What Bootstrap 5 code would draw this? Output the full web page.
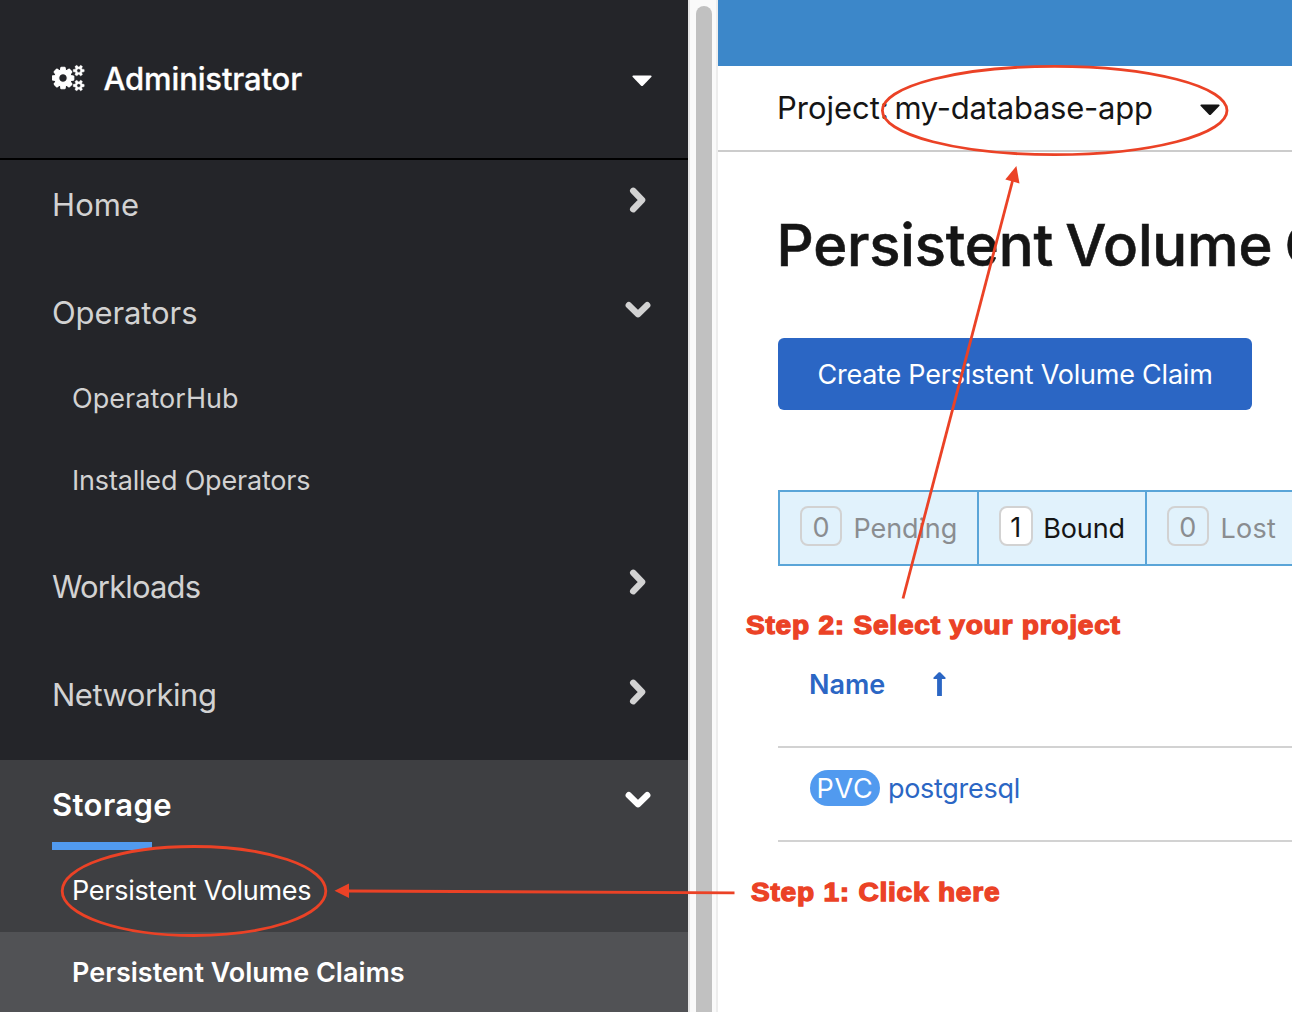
<!DOCTYPE html>
<html lang="en">
<head>
<meta charset="utf-8">
<meta name="viewport" content="width=device-width, initial-scale=1">
<title>Persistent Volume Claims</title>
<link href="https://cdn.jsdelivr.net/npm/bootstrap@5.3.0/dist/css/bootstrap.min.css" rel="stylesheet">
<style>
  body { font-family: Inter, sans-serif; font-size: 27px; line-height: 1.2; color: #151515; background: #fff; }
  .console { height: 1012px; position: relative; }
  .side { width: 688px; background: #242529; color: #d2d2d2; }
  .perspective { height: 160px; border-bottom: 2px solid #000; color: #fff; padding: 0 36px 0 52px; font-size: 31px; font-weight: 500; letter-spacing: -.14px; -webkit-text-stroke: .3px #fff; }
  .perspective .gears { margin: -2px 18.5px 0 0; }
  .section-head { height: 90px; padding: 0 37px 0 52px; font-size: 31px; letter-spacing: -.1px; }
  .section-head svg { margin-top: -10px; }
  .sec-home { height: 108px; }
  .sec-operators { height: 274px; }
  .sec-workloads { height: 108px; }
  .sec-networking { height: 110px; }
  .sec-operators .section-head svg, .sec-networking .section-head svg { margin-top: -6px; }
  .sec-storage { height: 252px; background: #3e3f42; color: #fff; }
  .sec-storage .section-head { font-weight: 600; letter-spacing: .4px; position: relative; }
  .sec-storage .section-head::after { content: ""; position: absolute; left: 52px; bottom: 0; width: 100px; height: 8px; background: #519aef; }
  .section-link { height: 82px; padding-left: 72px; letter-spacing: -.19px; }
  .section-link.current { background: #515255; font-weight: 600; letter-spacing: 0; }
  .ls-home { letter-spacing: .1px; }
  .ls-work { letter-spacing: -.85px; }
  .ls-net { letter-spacing: -.5px; }
  .section-link.ls-hub { letter-spacing: .05px; }
  .section-link.ls-pv { letter-spacing: -.28px; }
  .scroll-track { width: 30px; background: #fafafa; border-left: 2px solid #e6e6e6; border-right: 2px solid #ededed; padding: 6px 4px 0 6px; }
  .scroll-thumb { background: #c1c1c1; border-radius: 8px 8px 0 0; }
  .pane { min-width: 0; }
  .masthead { height: 66px; background: #3c87c9; }
  .project-bar { height: 86px; border-bottom: 2px solid #ccc; padding: 0 0 1px 59px; font-size: 31px; }
  .project-name { margin-left: 5.5px; letter-spacing: -.25px; }
  .project-bar svg { margin: 4px 0 0 47px; }
  .content { padding-left: 60px; }
  .page-title { font-size: 58px; font-weight: 500; letter-spacing: -.18px; word-spacing: -3px; line-height: 70px; margin: 58px 0 58px -1.5px; white-space: nowrap; -webkit-text-stroke: .6px #151515; }
  .btn-create { --bs-btn-color: #fff; --bs-btn-bg: #2b66c4; --bs-btn-hover-bg: #1f4f9c; --bs-btn-border-width: 0; width: 474px; height: 72px; font-size: 27px; border-radius: 6px; padding: 2px 0 0; letter-spacing: -.22px; }
  .filters { margin-top: 80px; height: 76px; width: 700px; border: 2px solid #5aa5d8; background: #e1f2fc; white-space: nowrap; }
  .filter { padding: 2px 19.5px 0 20px; border-right: 2px solid #5aa5d8; color: #8a8d90; letter-spacing: -.1px; }
  .filter .count { height: 40px; width: 42px; padding-top: 5px; border: 2px solid #d2d2d2; border-radius: 8px; margin: -6px 11.5px 0 0; }
  .filter.active { color: #151515; }
  .filter.active .count { background: #fff; width: 34px; margin-right: 10.5px; }
  .filter.lost { letter-spacing: .3px; margin-left: .5px; }
  .grid-head { height: 182px; border-bottom: 2px solid #d2d2d2; padding: 58px 0 0 31px; color: #2b66c4; font-weight: 600; }
  .grid-head svg { margin: -2px 0 0 48px; }
  .grid-row { height: 94px; border-bottom: 2px solid #d2d2d2; padding: 0 0 8px 32px; color: #2b66c4; letter-spacing: -.3px; }
  .kind { width: 70px; height: 36px; border-radius: 18px; background: #519aef; color: #fff; letter-spacing: .7px; padding-top: 3px; margin: -4px 8px 0 0; }
  .grid-row .volume { margin-top: -1px; }
  .marks { position: absolute; left: 0; top: 0; pointer-events: none; }
  .step-note { position: absolute; font: 700 26px/30px "Liberation Sans", sans-serif; color: #eb4226; -webkit-text-stroke: 1.3px #eb4226; letter-spacing: .7px; white-space: nowrap; transform: scaleX(1.08); transform-origin: left; }
  .note-project { left: 746px; top: 610px; }
  .note-click { left: 751px; top: 877px; }
</style>
<script src="https://cdn.jsdelivr.net/npm/bootstrap@5.3.0/dist/js/bootstrap.bundle.min.js"></script>
</head>
<body class="overflow-hidden">
<svg width="0" height="0" class="position-absolute">
  <symbol id="chev-right" viewBox="0 0 25 26"><path d="M7.7 3.8 16.6 13 7.7 22.2" fill="none" stroke="currentColor" stroke-width="6.4" stroke-linecap="round" stroke-linejoin="round"/></symbol>
  <symbol id="chev-down" viewBox="0 0 26 26"><path d="M3.8 8.2 13 17.2 22.2 8.2" fill="none" stroke="currentColor" stroke-width="6.4" stroke-linecap="round" stroke-linejoin="round"/></symbol>
  <symbol id="caret" viewBox="0 0 20 12"><path d="M1.3.5h17.4c.9 0 1.2.8.6 1.5l-8.2 8.500c-.7.7-1.500.7-2.200 0L.7 2C.1 1.300.4.5 1.300.5z" fill="currentColor"/></symbol>
  <g id="small-gear"><path d="M1664 384q0-52-38-90t-90-38-90 38-38 90q0 53 37.500 90.500t90.500 37.500 90.500-37.500 37.500-90.500zM1920 314v140q0 16-149 31-12 27-30 52 51 113 51 138 0 4-4 7-122 71-124 71-8 0-46-47t-52-68q-20 2-30 2t-30-2q-14 21-52 68t-46 47q-2 0-124-71-4-3-4-7 0-25 51-138-18-25-30-52-149-15-149-31v-140q0-16 149-31 13-29 30-52-51-113-51-138 0-4 4-7 4-2 35-20t59-34 30-16q8 0 46 46.500t52 67.500q20-2 30-2t30 2q51-71 92-112l6-2q4 0 124 70 4 3 4 7 0 25-51 138 17 23 30 52 149 15 149 31z"/></g>
</svg>
<div class="console d-flex overflow-hidden">
  <nav class="side flex-shrink-0">
    <div class="perspective d-flex align-items-center">
      <svg class="gears" width="33" height="28" viewBox="0 0 33 28" fill="#fff" stroke="#fff">
        <path stroke-width="70" transform="translate(11 14) scale(.0168) translate(-640 -896)" d="M896 896q0-106-75-181t-181-75-181 75-75 181 75 181 181 75 181-75 75-181zM1280 805v185q0 10-7 19.500t-16 10.500l-155 24q-11 35-32 76 34 48 90 115 7 11 7 20 0 12-7 19-23 30-82.500 89.500t-78.500 59.500q-11 0-21-7l-115-90q-37 19-77 31-11 108-23 155-7 24-30 24h-186q-11 0-20-7.500t-10-17.500l-23-153q-34-10-75-31l-118 89q-7 7-20 7-11 0-21-8-144-133-144-160 0-9 7-19 10-14 41-53t47-61q-23-44-35-82l-152-24q-10-1-17-9.500t-7-19.500v-185q0-10 7-19.500t16-10.500l155-24q11-35 32-76-34-48-90-115-7-11-7-20 0-12 7-20 22-30 82-89t79-59q11 0 21 7l115 90q34-18 77-32 11-108 23-154 7-24 30-24h186q11 0 20 7.500t10 17.500l23 153q34 10 75 31l118-89q8-7 20-7 11 0 21 8 144 133 144 160 0 8-7 19-12 16-42 54t-45 60q23 48 34 82l152 23q10 2 17 10.500t7 19.500z"/>
        <use stroke-width="36" href="#small-gear" transform="translate(26.7 6.600) scale(.0142) translate(-1536 -384)"/>
        <use stroke-width="36" href="#small-gear" transform="translate(26.7 21.500) scale(.0142) translate(-1536 -384)"/>
      </svg>
      <span>Administrator</span>
      <svg class="ms-auto mt-1" width="20" height="12"><use href="#caret"/></svg>
    </div>
    <div class="sec-home"><div class="section-head ls-home d-flex align-items-center justify-content-between">Home<svg width="26" height="26"><use href="#chev-right"/></svg></div></div>
    <div class="sec-operators">
      <div class="section-head d-flex align-items-center justify-content-between">Operators<svg width="26" height="26"><use href="#chev-down"/></svg></div>
      <div class="section-link ls-hub d-flex align-items-center">OperatorHub</div>
      <div class="section-link d-flex align-items-center">Installed Operators</div>
    </div>
    <div class="sec-workloads"><div class="section-head ls-work d-flex align-items-center justify-content-between">Workloads<svg width="26" height="26"><use href="#chev-right"/></svg></div></div>
    <div class="sec-networking"><div class="section-head ls-net d-flex align-items-center justify-content-between">Networking<svg width="26" height="26"><use href="#chev-right"/></svg></div></div>
    <div class="sec-storage">
      <div class="section-head d-flex align-items-center justify-content-between">Storage<svg width="26" height="26"><use href="#chev-down"/></svg></div>
      <div class="section-link ls-pv d-flex align-items-center">Persistent Volumes</div>
      <div class="section-link current d-flex align-items-center">Persistent Volume Claims</div>
    </div>
  </nav>
  <div class="scroll-track flex-shrink-0"><div class="scroll-thumb h-100"></div></div>
  <main class="pane flex-grow-1 overflow-hidden">
    <div class="masthead"></div>
    <div class="project-bar d-flex align-items-center">
      <span>Project:</span><span class="project-name">my-database-app</span>
      <svg width="20" height="12"><use href="#caret"/></svg>
    </div>
    <div class="content">
      <h1 class="page-title">Persistent Volume Claims</h1>
      <button type="button" class="btn btn-primary btn-create d-block">Create Persistent Volume Claim</button>
      <div class="filters d-flex">
        <div class="filter d-flex align-items-center"><span class="count d-flex align-items-center justify-content-center">0</span>Pending</div>
        <div class="filter active d-flex align-items-center"><span class="count d-flex align-items-center justify-content-center">1</span>Bound</div>
        <div class="filter lost d-flex align-items-center"><span class="count d-flex align-items-center justify-content-center">0</span>Lost</div>
      </div>
      <div class="grid-head d-flex align-items-center">Name<svg width="13" height="24" viewBox="0 0 13 24"><path d="M4.100 24V7H1.200C.3 7 0 6.200.6 5.500L5.500.6c.6-.6 1.400-.6 2 0l4.900 4.900c.6.7.3 1.500-.6 1.500H8.900v17z" fill="currentColor"/></svg></div>
      <div class="grid-row d-flex align-items-center"><span class="kind d-flex align-items-center justify-content-center">PVC</span><span class="volume">postgresql</span></div>
    </div>
  </main>
  <svg class="marks" width="1292" height="1012" viewBox="0 0 1292 1012" fill="none" stroke="#eb4226" stroke-width="2.800">
    <ellipse cx="1054.700" cy="110.500" rx="172.300" ry="44.200"/>
    <path d="M903 598.500 1012.500 181"/>
    <path d="M1016.400 166 1005.300 179.500 1019.500 183.500z" fill="#eb4226" stroke="none"/>
    <ellipse cx="194" cy="891" rx="131.800" ry="44.500"/>
    <path d="M348 891 734.500 892.800"/>
    <path d="M334.500 890.800 349 883.500V898z" fill="#eb4226" stroke="none"/>
  </svg>
  <div class="step-note note-project">Step 2: Select your project</div>
  <div class="step-note note-click">Step 1: Click here</div>
</div>
</body>
</html>
